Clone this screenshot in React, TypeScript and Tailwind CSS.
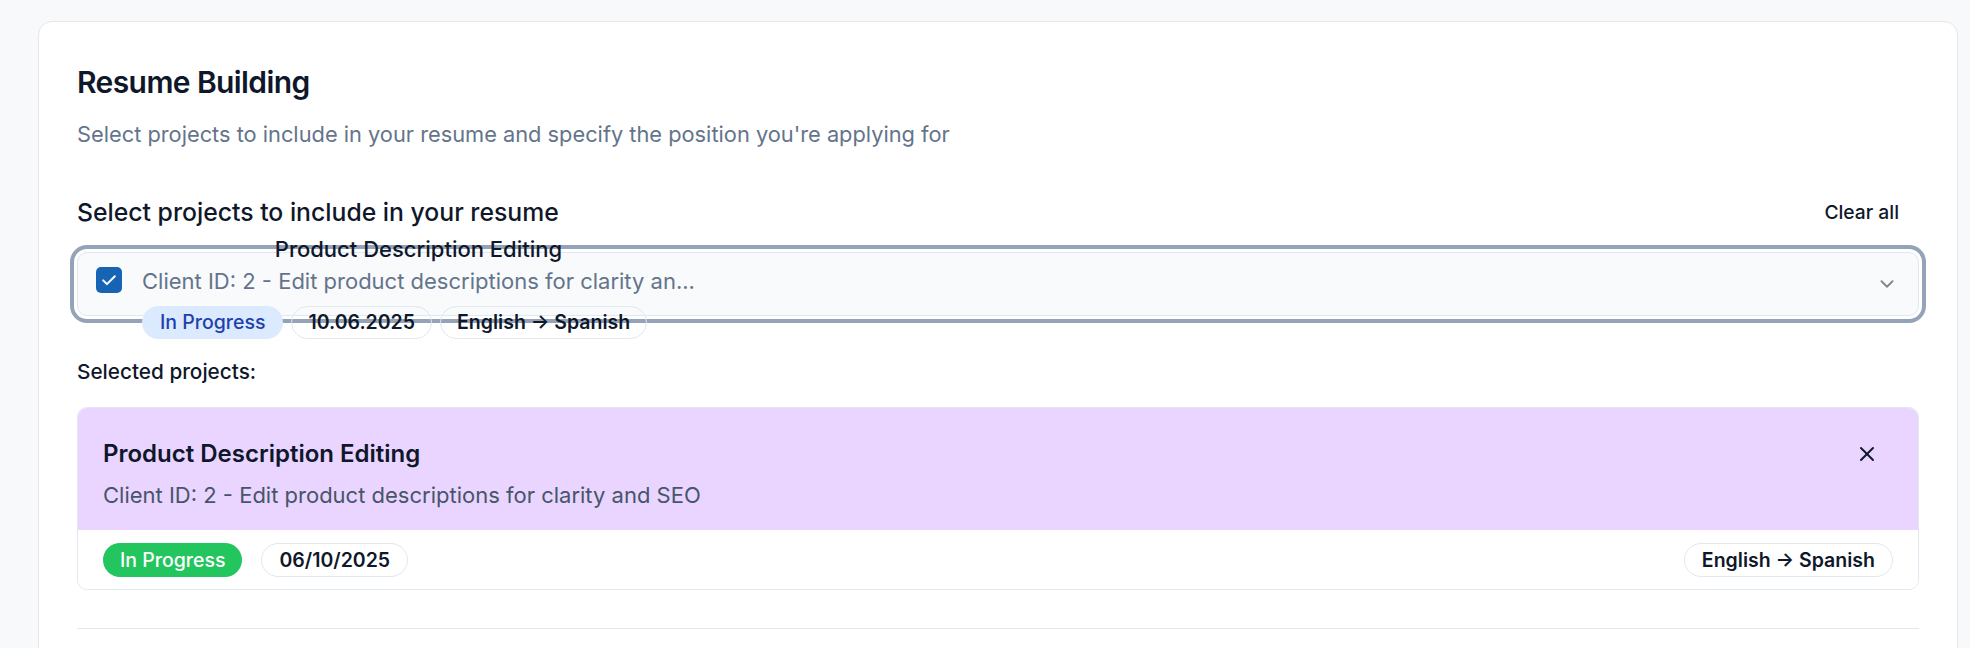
import React from "react";
import { ChevronDown, X } from "lucide-react";

function Pill({ children, className }: { children: React.ReactNode; className: string }) {
  return (
    <span className={"inline-flex items-center rounded-full whitespace-nowrap text-[19.5px] leading-[28px] " + className}>
      {children}
    </span>
  );
}

export default function App() {
  return (
    <div className="min-h-screen bg-[#f8f9fb] pl-[38px] pr-[12px] pt-[21px] font-['Inter',sans-serif] text-[#0f172a]">
      <div className="rounded-[14px] border border-[#e5e7eb] bg-white px-[38px] pt-[42px] pb-[60px]">
        <h2 className="text-[30px] leading-[36px] font-semibold tracking-[-0.02em] text-[#0f172a]">Resume Building</h2>
        <p className="mt-[19px] text-[21.8px] leading-[30px] text-[#64748b]">
          Select projects to include in your resume and specify the position you're applying for
        </p>

        <div className="mt-[43px] flex items-center justify-between">
          <h3 className="text-[24.75px] leading-[32px] font-medium text-[#0f172a]">Select projects to include in your resume</h3>
          <button className="flex h-[40px] items-center px-[20px] text-[19.25px] leading-[28px] font-medium text-[#0f172a]">
            Clear all
          </button>
        </div>

        <div className="mt-[20px] flex h-[64px] items-center justify-between rounded-[10px] border border-[#e2e8f0] bg-[#f8fafc] pl-[18px] pr-[20px] ring-[4px] ring-[#94a3b8] ring-offset-[3px] ring-offset-white">
          <div className="mt-[4px] grid grid-cols-[auto_auto] items-center gap-x-[20px]">
            <div />
            <div className="text-center text-[22px] leading-[30px] font-medium text-[#0f172a]">Product Description Editing</div>
            <div className="flex h-[26px] w-[26px] items-center justify-center rounded-[5px] bg-[#1764b5]">
              <svg width="20" height="20" viewBox="0 0 24 24" fill="none" stroke="white" strokeWidth="2.4" strokeLinecap="round" strokeLinejoin="round">
                <path d="M5 12.5l4.5 4.5L19 7.5" />
              </svg>
            </div>
            <div className="mt-[2px] text-[22px] leading-[30px] text-[#64748b]">
              Client ID: 2 - Edit product descriptions for clarity an...
            </div>
            <div />
            <div className="mt-[10px] flex gap-[8px]">
              <Pill className="h-[33px] bg-[#dbeafe] px-[18px] font-medium text-[#1e40af]">In Progress</Pill>
              <Pill className="h-[33px] border border-[#e2e8f0] px-[16px] font-semibold text-[#0f172a]">10.06.2025</Pill>
              <Pill className="h-[33px] border border-[#e2e8f0] px-[16px] font-semibold text-[#0f172a]">English → Spanish</Pill>
            </div>
          </div>
          <ChevronDown size={22} strokeWidth={2} className="text-[#0f172a] opacity-50" />
        </div>

        <div className="mt-[42px] text-[20.75px] leading-[28px] font-medium text-[#0f172a]">Selected projects:</div>

        <div className="mt-[21px] overflow-hidden rounded-[10px] border border-[#e2e8f0]">
          <div className="flex items-start justify-between bg-[#e9d5ff] px-[25px] pt-[30px] pb-[20px]">
            <div>
              <div className="text-[24px] leading-[32px] font-semibold text-[#0f172a]">Product Description Editing</div>
              <div className="mt-[10px] text-[22px] leading-[30px] text-[#475569]">
                Client ID: 2 - Edit product descriptions for clarity and SEO
              </div>
            </div>
            <button className="mr-[10px] flex h-[32px] w-[32px] items-center justify-center text-[#0f172a]">
              <X size={24} strokeWidth={2} />
            </button>
          </div>
          <div className="flex items-center justify-between bg-white px-[25px] pt-[13px] pb-[12px]">
            <div className="flex gap-[19px]">
              <Pill className="h-[34px] bg-[#22c55e] px-[17px] font-medium text-white">In Progress</Pill>
              <Pill className="h-[34px] border border-[#e2e8f0] px-[17px] font-semibold text-[#0f172a]">06/10/2025</Pill>
            </div>
            <Pill className="h-[34px] border border-[#e2e8f0] px-[17px] font-semibold text-[#0f172a]">English → Spanish</Pill>
          </div>
        </div>

        <div className="mt-[38px] h-px bg-[#e2e8f0]" />
        <div className="h-[80px]" />
      </div>
    </div>
  );
}
